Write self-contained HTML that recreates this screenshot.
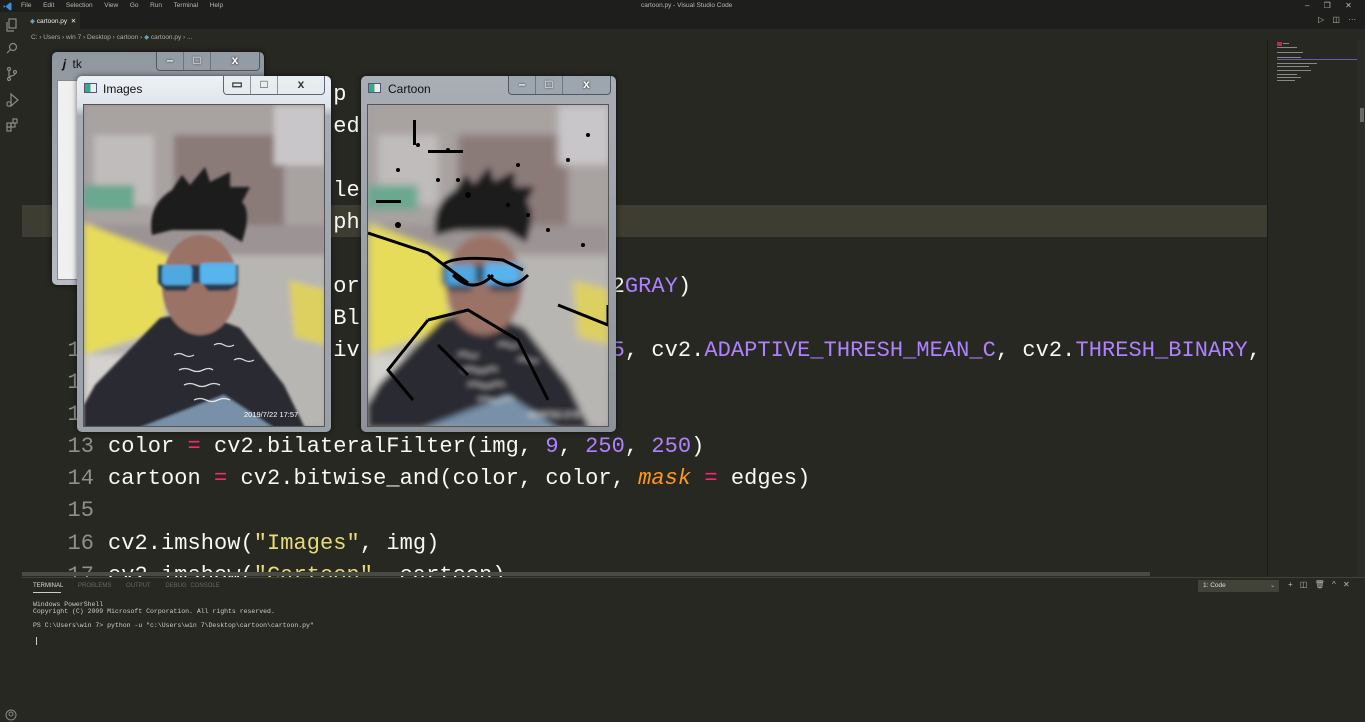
<!DOCTYPE html>
<html><head><meta charset="utf-8"><style>
*{margin:0;padding:0;box-sizing:border-box}
body{width:1365px;height:722px;overflow:hidden;background:#272822;font-family:"Liberation Sans",sans-serif;position:relative}
.abs{position:absolute}
.ui{font-size:6.5px;color:#b8b8b0;white-space:nowrap}
.code{position:absolute;left:0;font-family:"Liberation Mono",monospace;font-size:22px;line-height:32px;color:#f8f8f2;white-space:pre;letter-spacing:0.05px}
.ln{position:absolute;width:94px;text-align:right;color:#90908a}
.tx{position:absolute;left:108px}
.k{color:#f92672}.n{color:#ae81ff}.s{color:#e6db74}.o{color:#fd971f;font-style:italic}
.win{position:absolute;border-radius:5px;box-shadow:0 0 6px rgba(0,0,0,.6)}
.btns{position:absolute;top:0;height:19px;display:flex;border:1px solid rgba(60,70,80,.8);border-top:none;border-radius:0 0 4px 4px;background:rgba(150,160,170,.6)}
.btns div{height:18px;border-right:1px solid rgba(80,90,100,.6);color:#fff;font-size:12px;font-weight:bold;text-align:center;line-height:17px;text-shadow:0 0 2px #000}
.btns div:last-child{border-right:none}
.title{position:absolute;top:7px;font-size:12px;color:#111}
.term{font-family:"Liberation Mono",monospace;font-size:6.5px;color:#ccc;position:absolute;left:33px;white-space:pre}
</style></head><body>
<div class="abs" style="left:0;top:0;width:1365px;height:12px;background:#1e1f1c"></div>
<svg class="abs" style="left:3px;top:2px" width="9" height="9" viewBox="0 0 9 9"><path d="M7 0.5L8.5 1.2V7.8L7 8.5L2.5 4.5L1 5.8L0.5 5.3V3.7L1 3.2L2.5 4.5Z" fill="#3b8fd6"/></svg>
<div class="abs ui" style="left:21px;top:2px;word-spacing:4px">File&nbsp; Edit&nbsp; Selection&nbsp; View&nbsp; Go&nbsp; Run&nbsp; Terminal&nbsp; Help</div>
<div class="abs ui" style="left:641px;top:2px">cartoon.py - Visual Studio Code</div>
<div class="abs ui" style="left:1305px;top:1px;font-size:8px;word-spacing:12px">–  ❐  ✕</div>
<div class="abs" style="left:22px;top:12px;width:1343px;height:17px;background:#1e1f1c"></div>
<div class="abs" style="left:22px;top:12px;width:58px;height:17px;background:#272822"></div>
<div class="abs ui" style="left:30px;top:17px;color:#eee"><span style="color:#6a9fb5">◆</span> cartoon.py&nbsp; ✕</div>
<div class="abs ui" style="left:1318px;top:15px;font-size:8px;word-spacing:6px">▷ ◫ ···</div>
<div class="abs ui" style="left:31px;top:33px;color:#aaa">C: › Users › win 7 › Desktop › cartoon › <span style="color:#6a9fb5">◆</span> cartoon.py › ...</div>
<svg class="abs" style="left:5px;top:18px" width="14" height="120" viewBox="0 0 14 120" fill="none" stroke="#8a8a84" stroke-width="1.2">
<rect x="4" y="1" width="7" height="9"/><path d="M2 4v9h7"/>
<circle cx="8" cy="29" r="3.5"/><path d="M5.5 31.5L2 35"/>
<circle cx="4" cy="51" r="1.5"/><circle cx="4" cy="61" r="1.5"/><circle cx="10" cy="54" r="1.5"/><path d="M4 52.5v7M10 55.5c0 3-6 2-6 4"/>
<path d="M6 76l7 6-7 6z"/><circle cx="4" cy="86" r="2.2"/>
<rect x="2" y="105" width="4" height="4"/><rect x="6" y="105" width="4" height="4"/><rect x="2" y="109" width="4" height="4"/><rect x="8" y="101" width="4" height="4"/>
</svg>
<svg class="abs" style="left:5px;top:709px" width="12" height="12"><circle cx="6" cy="6" r="5" fill="none" stroke="#8a8a84"/><circle cx="6" cy="5" r="2" fill="none" stroke="#8a8a84"/></svg>
<div class="abs" style="left:22px;top:205px;width:1245px;height:32px;background:#3e3d32"></div>
<div class="code" style="top:47px;width:1267px;height:530px;overflow:hidden">
<div class="ln" style="top:0">1</div><div class="tx" style="top:0"><span class="k">import</span> cv2</div>
<div class="ln" style="top:32px">2</div><div class="tx" style="top:32px"><span class="k">import</span> numpy <span class="k">as</span>  p</div>
<div class="ln" style="top:64px">3</div><div class="tx" style="top:64px">img_path = sel   ed</div>
<div class="ln" style="top:128px">5</div><div class="tx" style="top:128px">cv2.namedWin     le</div>
<div class="ln" style="top:160px">6</div><div class="tx" style="top:160px">img = cv2.im     ph</div>
<div class="ln" style="top:224px">8</div><div class="tx" style="top:224px">gray = cv2.cvtCo or(img, cv2.COLOR_BGR2<span class="n">GRAY</span>)</div>
<div class="ln" style="top:256px">9</div><div class="tx" style="top:256px">gray = cv2.medi  Blur(gray, <span class="n">5</span>)</div>
<div class="ln" style="top:288px">10</div><div class="tx" style="top:288px">edges = cv2.ada  iveThreshold(gray, <span class="n">255</span>, cv2.<span class="n">ADAPTIVE_THRESH_MEAN_C</span>, cv2.<span class="n">THRESH_BINARY</span>, <span class="n">9</span>, <span class="n">9</span>)</div>
<div class="ln" style="top:320px">11</div>
<div class="ln" style="top:352px">12</div>
<div class="ln" style="top:384px">13</div><div class="tx" style="top:384px">color <span class="k">=</span> cv2.bilateralFilter(img, <span class="n">9</span>, <span class="n">250</span>, <span class="n">250</span>)</div>
<div class="ln" style="top:416px">14</div><div class="tx" style="top:416px">cartoon <span class="k">=</span> cv2.bitwise_and(color, color, <span class="o">mask</span> <span class="k">=</span> edges)</div>
<div class="ln" style="top:448px">15</div>
<div class="ln" style="top:481px">16</div><div class="tx" style="top:481px">cv2.imshow(<span class="s">"Images"</span>, img)</div>
<div class="ln" style="top:513px">17</div><div class="tx" style="top:513px">cv2.imshow(<span class="s">"Cartoon"</span>, cartoon)</div>
</div>
<div class="abs" style="left:22px;top:572px;width:1128px;height:4px;background:#4a4a44"></div>
<div class="abs" style="left:1267px;top:40px;width:1px;height:537px;background:#1a1a17"></div>
<svg class="abs" style="left:1275px;top:40px" width="90" height="50">
<rect x="2" y="2" width="5" height="4" fill="#b0304a"/><g fill="#888"><rect x="8" y="3" width="6" height="1"/><rect x="2" y="7" width="20" height="1"/><rect x="2" y="12" width="26" height="1"/><rect x="2" y="17" width="24" height="1"/><rect x="2" y="19" width="84" height="1" fill="#6a5ab0"/><rect x="2" y="23" width="40" height="1"/><rect x="2" y="26" width="32" height="1"/><rect x="2" y="30" width="34" height="1"/><rect x="2" y="34" width="20" height="1"/><rect x="2" y="37" width="24" height="1"/><rect x="2" y="40" width="18" height="1"/></g></svg>
<div class="abs" style="left:1357px;top:40px;width:8px;height:537px;background:#2b2c27"></div>
<div class="abs" style="left:1360px;top:108px;width:4px;height:14px;background:#6a6a66"></div>
<div class="abs" style="left:22px;top:577px;width:1343px;height:145px;background:#272822;border-top:1px solid #414339"></div>
<div class="abs ui" style="left:33px;top:583px;color:#ddd;font-size:6px;word-spacing:2px">TERMINAL&nbsp;&nbsp;&nbsp; <span style="color:#666">PROBLEMS&nbsp;&nbsp;&nbsp; OUTPUT&nbsp;&nbsp;&nbsp; DEBUG CONSOLE</span></div>
<div class="abs" style="left:33px;top:592px;width:28px;height:1px;background:#ccc"></div>
<div class="abs" style="left:1198px;top:580px;width:81px;height:12px;background:#414339"></div>
<div class="abs ui" style="left:1203px;top:582px;color:#ddd">1: Code</div>
<div class="abs ui" style="left:1270px;top:581px">⌄</div>
<div class="abs ui" style="left:1288px;top:580px;font-size:8px;word-spacing:5px">+ ◫ 🗑 ^ ✕</div>
<div class="term" style="top:601px">Windows PowerShell
Copyright (C) 2009 Microsoft Corporation. All rights reserved.

PS C:\Users\win 7&gt; python -u "c:\Users\win 7\Desktop\cartoon\cartoon.py"</div>
<div class="abs" style="left:36px;top:637px;width:1px;height:8px;background:#ccc"></div>

<svg width="0" height="0" style="position:absolute">
<defs>
<filter id="bl"><feGaussianBlur stdDeviation="3"/></filter>
<filter id="bl2"><feGaussianBlur stdDeviation="1.2"/></filter>
<g id="photo">
<rect width="242" height="323" fill="#9c9494"/>
<g filter="url(#bl)">
<rect x="0" y="0" width="242" height="120" fill="#a8a2a0"/>
<rect x="10" y="30" width="60" height="70" fill="#c0bcbc"/>
<rect x="90" y="30" width="110" height="90" fill="#8a7a78"/>
<rect x="190" y="0" width="52" height="60" fill="#c8c6c8"/>
<rect x="0" y="80" width="50" height="25" fill="#6aa890"/>
<rect x="0" y="150" width="242" height="173" fill="#b8b6b2"/>
<polygon points="0,118 85,150 80,225 0,250" fill="#e6dc5a"/>
<polygon points="205,175 242,185 242,240 210,232" fill="#ddd060"/>
<rect x="0" y="250" width="90" height="73" fill="#d4d2ce"/>
</g>
<g filter="url(#bl2)">
<polygon points="0,300 11,280 76,213 112,206 156,223 200,280 221,323 0,323" fill="#2a2a30"/>
<polygon points="55,323 140,290 190,323" fill="#7890a8"/>
<ellipse cx="116" cy="180" rx="38" ry="50" fill="#9a7266"/>
<path d="M68 130q-5-30 20-45l10-15 8 10 15-18 5 15 20-10 0 15 20 0-8 15q10 10 0 40l-20-12h-50z" fill="#1e1c1e"/>
<path d="M74 160h80v20l-10 6h-20l-6-8h-10l-6 8h-20l-8-8z" fill="#2a3a50"/>
<rect x="78" y="160" width="30" height="20" rx="4" fill="#4fa8e0"/><rect x="116" y="158" width="36" height="21" rx="4" fill="#58b4ec"/>
</g>
<g stroke="#eee" stroke-width="1.3" fill="none" opacity=".9"><path d="M90 250q5-3 10 0t10 0M95 265q6-3 12 0t12 0t10 0M100 280q6-3 12 0t12 0t12 0M110 295q6-3 12 0t12 0t12 0M130 240q5-3 10 0t10 0M150 255q5-3 10 0t10 0"/></g>
<text x="160" y="312" font-size="7.5" fill="#fff" font-family="Liberation Sans">2019/7/22 17:57</text>
</g>
</defs></svg>

<div class="win" style="left:52px;top:52px;width:212px;height:233px;background:linear-gradient(#8e969e,#b8bcc4)">
<div class="title" style="left:10px;top:5px;font-size:12px">𝒋&nbsp; tk</div>
<div class="btns" style="left:104px;width:104px"><div style="width:27px">–</div><div style="width:27px">□</div><div style="width:48px">x</div></div>
<div class="abs" style="left:5px;top:28px;width:202px;height:200px;background:#f0f0f0;border:1px solid #888"></div>
</div>
<div class="win" style="left:77px;top:76px;width:254px;height:356px;background:linear-gradient(#eef2f6 0,#dde4ea 30px,#a6acb4 40px,#9aa0a8)">
<div class="abs" style="left:7px;top:7px;width:13px;height:10px;border:1px solid #557;background:linear-gradient(90deg,#3a8 50%,#eee 50%)"></div>
<div class="title" style="left:26px;top:6px">Images</div>
<div class="btns" style="left:146px;width:102px;background:rgba(230,235,240,.6)"><div style="width:27px;color:#333;text-shadow:none">▭</div><div style="width:27px;color:#333;text-shadow:none">□</div><div style="width:46px;color:#333;text-shadow:none">x</div></div>
<svg class="abs" style="left:6px;top:28px;border:1px solid #555" width="242" height="323"><use href="#photo"/></svg>
</div>
<div class="win" style="left:361px;top:76px;width:255px;height:356px;background:linear-gradient(#a8aeb4,#8c929a)">
<div class="abs" style="left:7px;top:7px;width:13px;height:10px;border:1px solid #557;background:linear-gradient(90deg,#3a8 50%,#eee 50%)"></div>
<div class="title" style="left:27px;top:6px">Cartoon</div>
<div class="btns" style="left:147px;width:103px"><div style="width:27px">–</div><div style="width:27px">□</div><div style="width:47px">x</div></div>
<svg class="abs" style="left:6px;top:28px;border:1px solid #555" width="242" height="323"><g filter="url(#bl)"><use href="#photo"/></g>
<g stroke="#000" stroke-width="3" fill="none"><path d="M0 128l60 20 40 30M75 160q10-10 60-5l20 10M85 170q20 20 40 0M120 170q20 20 40 0M60 215l-40 50 25 30M60 215l40-10 50 30l30 60M70 240l30 30M190 200l50 20v-20"/></g>
<g fill="#000"><circle cx="50" cy="40" r="2"/><circle cx="80" cy="45" r="2"/><circle cx="100" cy="90" r="3"/><circle cx="140" cy="100" r="2"/><circle cx="160" cy="110" r="2"/><circle cx="180" cy="125" r="2"/><circle cx="30" cy="120" r="3"/><circle cx="200" cy="55" r="2"/><circle cx="220" cy="30" r="2"/><rect x="8" y="95" width="25" height="3"/><rect x="60" y="45" width="35" height="3"/><rect x="45" y="15" width="3" height="25"/><circle cx="70" cy="75" r="2"/><circle cx="90" cy="75" r="2"/><circle cx="30" cy="65" r="2"/><circle cx="150" cy="60" r="2"/><circle cx="215" cy="140" r="2"/></g></svg>
</div>
</body></html>
